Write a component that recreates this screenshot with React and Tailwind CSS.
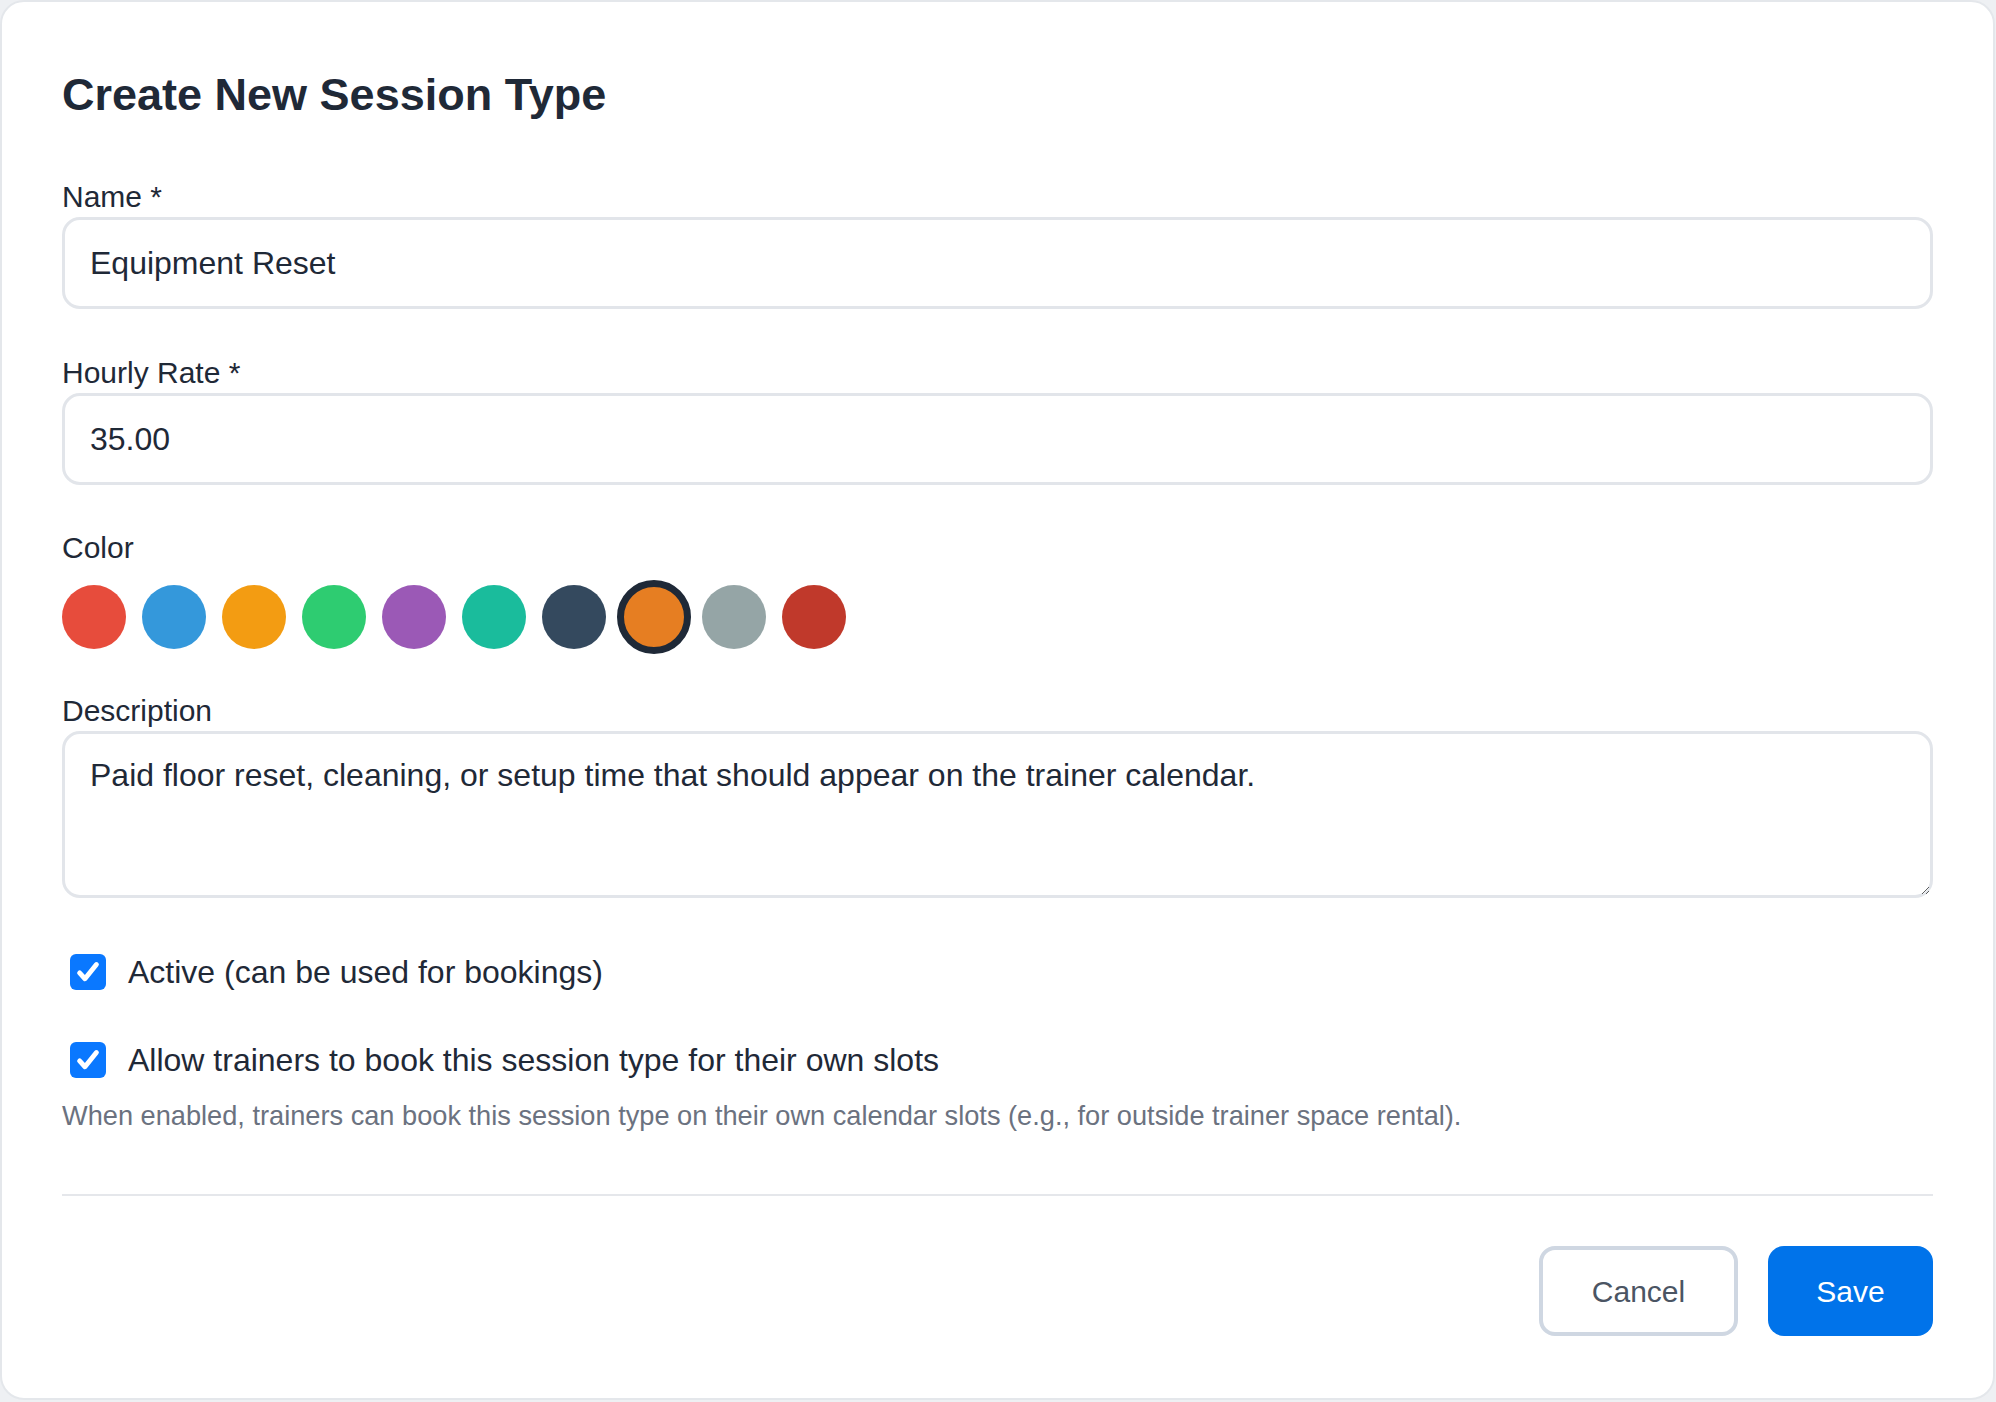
import React, { useState } from 'react';

const COLORS = [
  '#e74c3c',
  '#3498db',
  '#f39c12',
  '#2ecc71',
  '#9b59b6',
  '#1abc9c',
  '#34495e',
  '#e67e22',
  '#95a5a6',
  '#c0392b',
];

const Check = ({ checked, onChange }) => (
  <button
    type="button"
    onClick={onChange}
    className={`ml-[8px] w-[36px] h-[36px] rounded-[6px] flex items-center justify-center shrink-0 ${
      checked ? 'bg-[#0a78ff]' : 'bg-white border-2 border-[#9ca3af]'
    }`}
  >
    {checked && (
      <svg width="28" height="28" viewBox="0 0 24 24" fill="none">
        <path
          d="M4.8 12.8l4.6 5L19.2 5.6"
          stroke="white"
          strokeWidth="4.2"
          strokeLinecap="round"
          strokeLinejoin="round"
        />
      </svg>
    )}
  </button>
);

const App = () => {
  const [name, setName] = useState('Equipment Reset');
  const [rate, setRate] = useState('35.00');
  const [color, setColor] = useState('#e67e22');
  const [desc, setDesc] = useState(
    'Paid floor reset, cleaning, or setup time that should appear on the trainer calendar.'
  );
  const [active, setActive] = useState(true);
  const [trainerBook, setTrainerBook] = useState(true);

  return (
    <div
      className="w-[1996px] h-[1402px] bg-[#eef0f3] text-[#1f2937]"
      style={{ fontFamily: '"Liberation Sans", Arial, sans-serif' }}
    >
      <div className="w-[1995px] h-[1400px] bg-white border-2 border-[#e4e7eb] rounded-[24px] px-[60px] pt-[65px] pb-[60px] flex flex-col">
        <h2 className="text-[45px] leading-[56px] font-bold text-[#1f2937]">Create New Session Type</h2>

        {/* Name */}
        <label className="mt-[56px] text-[30px] leading-[36px]">Name *</label>
        <input
          value={name}
          onChange={(e) => setName(e.target.value)}
          className="mt-[2px] h-[92px] w-full border-[3px] border-[#e2e5ea] rounded-[18px] px-[25px] text-[32px] text-[#1f2937] outline-none"
        />

        {/* Rate */}
        <label className="mt-[46px] text-[30px] leading-[36px]">Hourly Rate *</label>
        <input
          value={rate}
          onChange={(e) => setRate(e.target.value)}
          className="mt-[2px] h-[92px] w-full border-[3px] border-[#e2e5ea] rounded-[18px] px-[25px] text-[32px] text-[#1f2937] outline-none"
        />

        {/* Color */}
        <label className="mt-[45px] text-[30px] leading-[36px]">Color</label>
        <div className="mt-[19px] flex gap-[16px]">
          {COLORS.map((c) => (
            <div key={c} className="w-[64px] h-[64px] flex items-center justify-center">
              <button
                type="button"
                onClick={() => setColor(c)}
                className={`shrink-0 rounded-full ${
                  color === c
                    ? 'w-[74px] h-[74px] border-[7px] border-[#1f2937]'
                    : 'w-[64px] h-[64px]'
                }`}
                style={{ backgroundColor: c }}
              />
            </div>
          ))}
        </div>

        {/* Description */}
        <label className="mt-[44px] text-[30px] leading-[36px]">Description</label>
        <textarea
          value={desc}
          onChange={(e) => setDesc(e.target.value)}
          className="mt-[2px] h-[167px] w-full border-[3px] border-[#e2e5ea] rounded-[18px] px-[25px] py-[20px] text-[32px] leading-[42px] text-[#1f2937] outline-none resize-y"
        />

        {/* Checkboxes */}
        <div className="mt-[54px] flex items-center gap-[22px] h-[40px]">
          <Check checked={active} onChange={() => setActive(!active)} />
          <span className="text-[32px] leading-[40px]">Active (can be used for bookings)</span>
        </div>
        <div className="mt-[48px] flex items-center gap-[22px] h-[40px]">
          <Check checked={trainerBook} onChange={() => setTrainerBook(!trainerBook)} />
          <span className="text-[32px] leading-[40px]">Allow trainers to book this session type for their own slots</span>
        </div>
        <p className="mt-[18px] text-[27.2px] leading-[36px] text-[#6b7280]">
          When enabled, trainers can book this session type on their own calendar slots (e.g., for outside trainer space rental).
        </p>

        <div className="mt-[60px] h-[2px] bg-[#e5e7eb]" />

        {/* Actions */}
        <div className="mt-[50px] flex justify-end gap-[30px]">
          <button
            type="button"
            className="w-[199px] h-[90px] rounded-[16px] border-[4px] border-[#cfd7e2] bg-white text-[30px] text-[#4b5563]"
          >
            Cancel
          </button>
          <button
            type="button"
            className="w-[165px] h-[90px] rounded-[16px] bg-[#0073ea] text-[30px] text-white"
          >
            Save
          </button>
        </div>
      </div>
    </div>
  );
};

export default App;
